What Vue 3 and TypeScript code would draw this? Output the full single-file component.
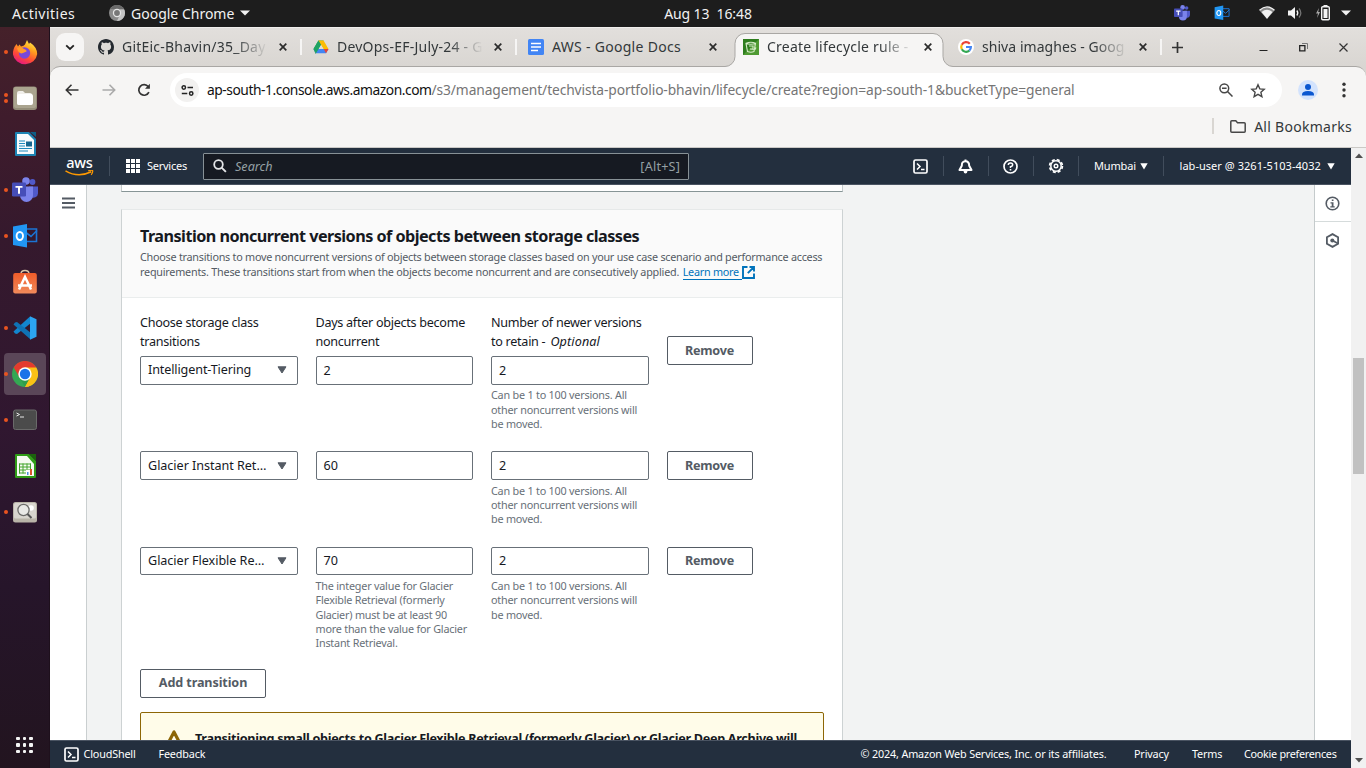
<script setup lang="ts">
interface Tab { title: string; icon: 'github' | 'drive' | 'docs' | 's3' | 'google'; active?: boolean; sep?: boolean }
interface Transition { storage: string; days: string; keep: string; help: string[] }

const tabs: Tab[] = [
  { title: 'GitEic-Bhavin/35_Day', icon: 'github', sep: true },
  { title: 'DevOps-EF-July-24 - G', icon: 'drive', sep: true },
  { title: 'AWS - Google Docs', icon: 'docs' },
  { title: 'Create lifecycle rule -', icon: 's3', active: true },
  { title: 'shiva imaghes - Goog', icon: 'google', sep: true },
]

const transitions: Transition[] = [
  { storage: 'Intelligent-Tiering', days: '2', keep: '2', help: [] },
  { storage: 'Glacier Instant Ret…', days: '60', keep: '2', help: [] },
  {
    storage: 'Glacier Flexible Re…',
    days: '70',
    keep: '2',
    help: ['The integer value for Glacier', 'Flexible Retrieval (formerly', 'Glacier) must be at least 90', 'more than the value for Glacier', 'Instant Retrieval.'],
  },
]
const keepHelp: string[] = ['Can be 1 to 100 versions. All', 'other noncurrent versions will', 'be moved.']

const dock: { name: string; dots: number; current?: boolean }[] = [
  { name: 'firefox', dots: 1 },
  { name: 'files', dots: 2 },
  { name: 'writer', dots: 0 },
  { name: 'teams', dots: 1 },
  { name: 'outlook', dots: 1 },
  { name: 'software', dots: 0 },
  { name: 'vscode', dots: 1 },
  { name: 'chrome', dots: 1, current: true },
  { name: 'terminal', dots: 1 },
  { name: 'calc', dots: 0 },
  { name: 'viewer', dots: 1 },
]
const nine: number[] = [0, 1, 2, 3, 4, 5, 6, 7, 8]
</script>

<template>
  <div class="desktop">
    <header class="topbar">
      <span class="activities">Activities</span>
      <svg class="tb-chrome" width="16" height="16" viewBox="0 0 16 16">
        <circle cx="8" cy="8" r="8" fill="#8b8b8b" /><path d="M1 4A8 8 0 0 1 15 4H8z" fill="#6a6a6a" /><path d="M15.2 4.5A8 8 0 0 1 8 16L11 9.5 10.500 4.500z" fill="#c4c4c4" />
        <circle cx="8" cy="8" r="4.200" fill="#e6e6e6" /><circle cx="8" cy="8" r="2.900" fill="#777" />
      </svg>
      <span class="appname">Google Chrome</span>
      <svg class="tb-caret" width="10" height="6" viewBox="0 0 10 6"><path d="M0 .5h10L5 5.500z" fill="#f2f2f2" /></svg>
      <span class="clock">Aug 13&nbsp; 16:48</span>
      <div class="tray">
        <svg class="t-teams" width="16" height="16" viewBox="0 0 26 26"><use href="#teams" /></svg>
        <svg class="t-outlook" width="16" height="16" viewBox="0 0 26 26"><use href="#outlook" /></svg>
        <svg class="t-wifi" width="16" height="14" viewBox="0 0 16 14"><path d="M0.500 4.500Q8-2.500 15.500 4.500L8 13z" fill="#8a8a8a" /><path d="M2.500 6Q8 1.500 13.500 6L8 12.800z" fill="#f2f2f2" /><path d="M.5 4.300Q8-2.500 15.500 4.300" fill="none" stroke="#f2f2f2" stroke-width="1.300" /></svg>
        <svg class="t-vol" width="16" height="14" viewBox="0 0 16 14"><path d="M1 4.500h3L8 1v12L4 9.500H1z" fill="#f2f2f2" /><path d="M9.800 4.500q2 2.500 0 5" fill="none" stroke="#f2f2f2" stroke-width="1.300" /><path d="M12 2.500q3.700 4.500 0 9" fill="none" stroke="#777" stroke-width="1.200" /></svg>
        <svg class="t-bat" width="15" height="16" viewBox="0 0 15 16"><path d="M3 3L0 8.500h2L1 13l3-6H2.200z" fill="#aaa" /><path d="M7.500 0h4v2h-4z" fill="#f2f2f2" /><rect x="5.700" y="1.700" width="7.600" height="13" rx="1" fill="none" stroke="#f2f2f2" stroke-width="1.400" /><path d="M7.500 4h4v9h-4z" fill="#f2f2f2" /></svg>
        <svg width="10" height="6" viewBox="0 0 10 6"><path d="M0 .5h10L5 5.500z" fill="#f2f2f2" /></svg>
      </div>
    </header>

    <svg class="defs" width="0" height="0">
      <defs>
        <linearGradient id="ffg" x1=".8" y1="0" x2=".3" y2="1"><stop offset="0" stop-color="#fff44f" /><stop offset=".35" stop-color="#ffa21e" /><stop offset=".7" stop-color="#ff4a36" /><stop offset="1" stop-color="#e31587" /></linearGradient>
        <linearGradient id="swg" x1="0" y1="0" x2="0" y2="1"><stop offset="0" stop-color="#ef5b29" /><stop offset="1" stop-color="#f08a5b" /></linearGradient>
        <g id="teams">
          <circle cx="20.500" cy="5" r="2.900" fill="#5059c9" /><path d="M17 9.500h9v6.500a4.500 4.500 0 0 1-7.500 3.500z" fill="#5059c9" />
          <circle cx="14" cy="4" r="3.800" fill="#7b83eb" /><path d="M8 9.500h13v9a6.500 6.500 0 0 1-13 0z" fill="#7b83eb" />
          <rect y="5.500" width="14" height="14" rx="1.300" fill="#464eb8" /><path d="M3.500 9h7v1.800H8v6H6v-6H3.500z" fill="#fff" />
        </g>
        <g id="outlook">
          <path d="M13 6h11.500v12.500H13z" fill="none" stroke="#1b74d3" stroke-width="1.600" /><path d="M14.500 10l4.500 3.500 6-6" fill="none" stroke="#1b74d3" stroke-width="1.600" />
          <path d="M1 3.500L15 1v23.500L1 22z" fill="#2196f3" /><ellipse cx="7.800" cy="13" rx="3.200" ry="4" fill="none" stroke="#fff" stroke-width="1.900" />
        </g>
      </defs>
    </svg>

    <div class="below">
      <nav class="dock">
        <div v-for="d in dock" :key="d.name" class="dock-item" :class="{ current: d.current }">
          <div class="dots"><i v-for="n in d.dots" :key="n"></i></div>
          <svg width="26" height="26" viewBox="0 0 26 26">
            <g v-if="d.name === 'firefox'">
              <path d="M4.500 5L6 7.500 7.500 5.500 9 7.500Q12 7 13 5.500L15 1l2 4 1-1.500Q25 8 25.200 15A12.200 11.500 0 0 1 1 15.500Q.5 10 4.500 5z" fill="url(#ffg)" />
              <circle cx="12.500" cy="14" r="5.700" fill="#7848d8" /><path d="M5 9q4-2 7 1 3 1 2.500 2.500L11 14q-3 1.500-5-2z" fill="#ff9a2b" />
            </g>
            <g v-else-if="d.name === 'files'">
              <rect x="1" y="1.500" width="24" height="23.500" rx="3" fill="#948d79" /><rect x="2" y="2" width="22" height="21" rx="2" fill="#aaa48f" />
              <path d="M5 8q0-2 2-2h4l2 2h5q2 0 2 2v8q0 2-2 2H7q-2 0-2-2z" fill="#f1efea" /><rect x="5" y="9" width="16" height="11" rx="2" fill="#fff" />
            </g>
            <g v-else-if="d.name === 'writer'">
              <path d="M4 1h13l7 7v16q0 1-1 1H4q-1 0-1-1V2q0-1 1-1z" fill="#1c84b4" /><path d="M5 3h11l6 6v14H5z" fill="#f7fbfd" /><path d="M18 1h6v5z" fill="#0e5e86" />
              <path d="M7 10h6M7 12.500h6M7 15h6M7 17.500h13M7 20h9" stroke="#1e8bbd" stroke-width="1.200" /><path d="M14 10.500h6v5h-6z" fill="#17678f" />
            </g>
            <use v-else-if="d.name === 'teams'" href="#teams" />
            <use v-else-if="d.name === 'outlook'" href="#outlook" />
            <g v-else-if="d.name === 'software'">
              <path d="M9 5q0-3.500 4-3.500T17 5" fill="none" stroke="#d9c7a8" stroke-width="1.400" /><rect x="1.200" y="4" width="23.600" height="20.500" rx="2" fill="url(#swg)" />
              <path d="M7 20.500L13 8l6 12.500M6 16.500h14" fill="none" stroke="#fff" stroke-width="2.500" />
            </g>
            <g v-else-if="d.name === 'vscode'">
              <path d="M18 1.500L1.500 16.500l1.500 2 2 .5L19 8z" fill="#1286cf" /><path d="M18 24L1.500 9.500l1.500-2 2-.5L19 18z" fill="#0f72b5" /><path d="M18 1.200l6.500 3v17.600l-6.500 3z" fill="#2ca5f2" />
            </g>
            <g v-else-if="d.name === 'chrome'">
              <circle cx="13" cy="13" r="13" fill="#34a853" /><path d="M1.700 6.500A13 13 0 0 1 24.300 6.500L13 13z" fill="#e33b2e" /><path d="M24.300 6.500A13 13 0 0 1 13 26L18 16 13 6.500z" fill="#fbc116" />
              <path d="M1.700 6.500L7.600 16.500 13 6.500z" fill="#e33b2e" /><path d="M13 26L18.600 16H13L7.400 16z" fill="#2e9d4c" /><path d="M13 26L18.600 16 20 13l4.500 5Q20 26 13 26z" fill="#fbc116" />
              <circle cx="13" cy="13" r="6.700" fill="#fff" /><circle cx="13" cy="13" r="5.200" fill="#1a73e8" />
            </g>
            <g v-else-if="d.name === 'terminal'">
              <rect x="1.500" y="3" width="23" height="19.500" rx="2" fill="#4b4b4b" stroke="#6a6a6a" /><path d="M4.500 6l3 1.500-3 1.500M8 10h4" fill="none" stroke="#e8e8e8" />
            </g>
            <g v-else-if="d.name === 'calc'">
              <path d="M4 1h13l7 7v16q0 1-1 1H4q-1 0-1-1V2q0-1 1-1z" fill="#2f9c17" /><path d="M5 3h10l7 8v12H5z" fill="#f5fbf2" /><path d="M17 1h7v7z" fill="#1b620d" />
              <path d="M7 11h12M7 14h12M7 17h12M7 20h7M7.500 10.500v10M11 10.500v10M15 10.500v6M18.500 10.500v6" stroke="#42a52c" /><path d="M14 17h7v5h-7z" fill="#fff" /><path d="M15 19h1.500v3H15z" fill="#4a90d9" /><path d="M18 16h2v6h-2z" fill="#d9562b" />
            </g>
            <g v-else>
              <rect x="1" y="3" width="24" height="20.500" rx="2.500" fill="#b9b4a8" /><rect x="2" y="4" width="22" height="15.500" rx="1.500" fill="#d8d5ce" /><circle cx="19" cy="9" r="2.800" fill="#fff" />
              <circle cx="11.500" cy="11" r="5.600" fill="#e9e9e6" stroke="#6c6c6a" stroke-width="1.300" /><path d="M15.500 15l4 4" stroke="#555" stroke-width="2" />
            </g>
          </svg>
        </div>
        <div class="apps"><i v-for="n in nine" :key="n"></i></div>
      </nav>

      <main class="window">
        <div class="tabstrip">
          <button class="tabsearch"><svg width="10" height="7" viewBox="0 0 10 7"><path d="M1.200 1.300L5 5l3.800-3.700" fill="none" stroke="#222" stroke-width="1.800" /></svg></button>
          <div v-for="t in tabs" :key="t.title" class="tab" :class="{ active: t.active, sep: t.sep }">
            <svg v-if="t.active" class="tabshape" width="232" height="34" viewBox="0 0 232 34"><path d="M0 34V33.500H2A10 10 0 0 0 12 23.500V10.500A10 10 0 0 1 22 .5H210A10 10 0 0 1 220 10.500V23.500A10 10 0 0 0 230 33.500H232V34z" fill="#f6f5f4" /><path d="M0 33.500H2A10 10 0 0 0 12 23.500V10.500A10 10 0 0 1 22 .5H210A10 10 0 0 1 220 10.500V23.500A10 10 0 0 0 230 33.500H232" fill="none" stroke="#a9a7a4" /></svg>
            <svg class="favicon" width="16" height="16" viewBox="0 0 16 16">
              <path v-if="t.icon === 'github'" fill="#24292f" d="M8 0C3.580 0 0 3.580 0 8c0 3.540 2.290 6.530 5.470 7.590.4.070.55-.17.55-.38 0-.19-.01-.82-.01-1.490-2.010.37-2.530-.49-2.690-.94-.09-.23-.48-.94-.82-1.130-.28-.15-.68-.52-.01-.53.63-.01 1.080.58 1.230.82.72 1.210 1.870.87 2.330.66.070-.52.28-.87.51-1.070-1.780-.2-3.640-.89-3.640-3.950 0-.87.31-1.590.82-2.150-.08-.2-.36-1.020.08-2.120 0 0 .67-.21 2.200.82.64-.18 1.320-.27 2-.27s1.360.09 2 .27c1.530-1.040 2.200-.82 2.200-.82.44 1.100.16 1.920.08 2.120.51.56.82 1.270.82 2.150 0 3.070-1.870 3.750-3.650 3.950.29.25.54.73.54 1.480 0 1.070-.01 1.930-.01 2.200 0 .21.15.46.55.38A8.010 8.010 0 0 0 16 8c0-4.420-3.580-8-8-8" />
              <g v-else-if="t.icon === 'drive'">
                <path d="M5.400 1.500h5.200L5 11 2.600 15 .5 10z" fill="#34a853" /><path d="M5.400 1.500h5.200L15.500 10h-5z" fill="#fbbc04" /><path d="M.5 10h15L13 14.300H3z" fill="#4285f4" /><path d="M5.400 1.500L8 6 3 14.300.500 10z" fill="#1ea362" /><path d="M10.800 10h4.700L13 14.300z" fill="#ea4335" /><path d="M8 6l2.300 4H5.700z" fill="#e0ddd9" />
              </g>
              <g v-else-if="t.icon === 'docs'"><rect width="16" height="16" rx="1.500" fill="#4285f4" /><path d="M3 4.500h10M3 8h10M3 11.500h7" stroke="#fff" stroke-width="1.700" /></g>
              <g v-else-if="t.icon === 's3'"><path d="M0 0h16v16H0z" fill="#2e7d1e" /><path d="M0 16L16 0v16z" fill="#4f9a32" /><path d="M3 4.300q5-2 9.500 0L11 12.500q-3 1.500-6.500 0zM3 4.300q5 2 9.500 0M6 7h4v3H7l5 .5 1-2" fill="none" stroke="#d7ecc9" stroke-width="1.100" /></g>
              <g v-else fill="none" stroke-width="2.200"><circle cx="8" cy="8" r="8" fill="#fff" /><path d="M11.800 4.800A4.900 4.900 0 0 0 3.800 5.700" stroke="#ea4335" /><path d="M3.800 5.700a4.900 4.900 0 0 0 0 4.600" stroke="#fbbc05" /><path d="M3.800 10.300a4.900 4.900 0 0 0 7.500 1.300" stroke="#34a853" /><path d="M11.300 11.600A4.900 4.900 0 0 0 12.900 8H8" stroke="#4285f4" /></g>
            </svg>
            <span class="tabtitle" :class="t.icon">{{ t.title }}</span>
            <svg class="tabclose" width="8" height="8" viewBox="0 0 8 8"><path d="M.7.700l6.600 6.600M7.300.700L.7 7.300" stroke="#2c2c2c" stroke-width="1.700" /></svg>
          </div>
          <svg class="newtab" width="11" height="11" viewBox="0 0 11 11"><path d="M5.500 0v11M0 5.500h11" stroke="#333" stroke-width="1.700" /></svg>
          <div class="winctl">
            <svg width="9" height="10" viewBox="0 0 9 10"><path d="M.5 7.500h8" stroke="#222" stroke-width="1" /></svg>
            <svg width="9" height="9" viewBox="0 0 9 9"><path d="M.7 2.700h5.200v5.200H.7z" fill="none" stroke="#222" stroke-width="1.300" /><path d="M3 .5h5.500V6" fill="none" stroke="#777" /></svg>
            <svg width="9" height="9" viewBox="0 0 9 9"><path d="M.5.500l8 8M8.500.500l-8 8" stroke="#333" stroke-width="1.200" /></svg>
          </div>
        </div>

        <div class="toolbar">
          <svg class="back" width="14" height="12" viewBox="0 0 14 12"><path d="M6.500.700L1.300 6l5.200 5.300M1.500 6H13.500" fill="none" stroke="#333" stroke-width="1.600" /></svg>
          <svg class="fwd" width="14" height="12" viewBox="0 0 14 12"><path d="M7.500.700L12.700 6 7.500 11.300M12.500 6H.5" fill="none" stroke="#aaa" stroke-width="1.600" /></svg>
          <svg class="reload" width="14" height="14" viewBox="0 0 14 14"><path d="M11.900 9.200A5.300 5.300 0 1 1 11.300 3.700L12 4.500" fill="none" stroke="#333" stroke-width="1.700" /><path d="M12.900.800v4.900H8z" fill="#333" /></svg>
          <div class="urlbar">
            <div class="site"><svg width="13" height="11" viewBox="0 0 13 11"><g fill="none" stroke="#222" stroke-width="1.500"><circle cx="2.800" cy="2.500" r="1.700" /><path d="M6.500 2.500H12M.8 8.500h5.500" /><circle cx="10.200" cy="8.500" r="1.700" /></g></svg></div>
            <span class="url"><b>ap-south-1.console.aws.amazon.com</b><span class="urlpath">/s3/management/techvista-portfolio-bhavin/lifecycle/create?region=ap-south-1&amp;bucketType=general</span></span>
            <svg class="zoomout" width="14" height="14" viewBox="0 0 14 14"><circle cx="5.300" cy="5.300" r="4.400" fill="none" stroke="#474747" stroke-width="1.500" /><path d="M3 5.300h4.600M8.500 8.500l5 5" stroke="#474747" stroke-width="1.500" /></svg>
            <svg class="star" width="16" height="15" viewBox="0 0 16 15"><path d="M8 1.800l1.800 4.100 4.400.4-3.300 3 1 4.400L8 11.400l-3.900 2.300 1-4.400-3.300-3 4.400-.4z" fill="none" stroke="#474747" stroke-width="1.400" /></svg>
          </div>
          <svg class="profile" width="20" height="20" viewBox="0 0 20 20"><circle cx="10" cy="10" r="10" fill="#d3e3fd" /><circle cx="10" cy="7" r="3" fill="#0b57d0" /><path d="M4 15.500v-1q0-3.500 6-3.500t6 3.500v1z" fill="#0b57d0" /></svg>
          <svg class="menu" width="4" height="16" viewBox="0 0 4 16"><g fill="#333"><circle cx="2" cy="2.300" r="1.700" /><circle cx="2" cy="8" r="1.700" /><circle cx="2" cy="13.700" r="1.700" /></g></svg>
        </div>
        <div class="bookmarks">
          <i class="bmsep"></i>
          <svg width="16" height="13" viewBox="0 0 16 13"><path d="M.8 1.800q0-1 1-1h4l1.700 1.900h6.700q1 0 1 1v7.500q0 1-1 1H1.800q-1 0-1-1z" fill="none" stroke="#474747" stroke-width="1.500" /></svg>
          <span>All Bookmarks</span>
        </div>

        <div class="view">
          <div class="page">
            <div class="awsnav">
              <div class="logo"><span>aws</span><svg width="29" height="7" viewBox="0 0 29 7"><path d="M.5.800Q13 8.200 26.300 1.800" fill="none" stroke="#f90" stroke-width="1.500" /><path d="M23.200.800Q27.500-.3 27.700.800q.3 1.500-1.500 4" fill="none" stroke="#f90" stroke-width="1.200" /></svg></div>
              <i class="div d1"></i>
              <div class="grid9"><i v-for="n in nine" :key="n"></i></div>
              <span class="services">Services</span>
              <div class="search">
                <svg width="14" height="14" viewBox="0 0 14 14"><circle cx="5.500" cy="5.500" r="4.300" fill="none" stroke="#e4e6e8" stroke-width="1.800" /><path d="M8.600 8.600l4.300 4.300" stroke="#e4e6e8" stroke-width="1.900" /></svg>
                <em>Search</em><span>[Alt+S]</span>
              </div>
              <div class="navicons">
                <div class="cell"><svg width="15" height="15" viewBox="0 0 15 15"><rect x="1" y="1" width="13" height="13" rx="1.500" fill="none" stroke="#fff" stroke-width="1.700" /><path d="M4 4.500l3 3-3 3M8 10.500h3.500" fill="none" stroke="#fff" stroke-width="1.500" /></svg></div>
                <div class="cell"><svg width="15" height="15" viewBox="0 0 15 15"><path d="M7.500.500v2M7.500 2.200c-3 0-3.700 2-3.700 4.500L1.500 11h12l-2.300-4.300C11.200 4.200 10.500 2.200 7.500 2.200z" fill="none" stroke="#fff" stroke-width="2" stroke-linejoin="round" /><path d="M5.500 12h4q-.3 2.500-2 2.500t-2-2.500z" fill="#fff" /></svg></div>
                <div class="cell"><svg width="15" height="15" viewBox="0 0 15 15"><circle cx="7.500" cy="7.500" r="6.500" fill="none" stroke="#fff" stroke-width="1.700" /><path d="M5.300 6Q5.300 4 7.500 4t2.200 1.900q0 1.300-2.200 1.800V9" fill="none" stroke="#fff" stroke-width="1.500" /><path d="M6.700 10h1.600v1.500H6.700z" fill="#fff" /></svg></div>
                <div class="cell"><svg width="16" height="16" viewBox="0 0 16 16"><circle cx="8" cy="8" r="6.400" fill="none" stroke="#fff" stroke-width="1.700" stroke-dasharray="3 2.027" /><circle cx="8" cy="8" r="5.200" fill="none" stroke="#fff" stroke-width="1.500" /><circle cx="8" cy="8" r="1.800" fill="none" stroke="#fff" stroke-width="1.400" /></svg></div>
              </div>
              <div class="region"><span>Mumbai</span><svg width="8" height="7" viewBox="0 0 8 7"><path d="M.3.300h7.400L4 6.500z" fill="#fff" /></svg></div>
              <div class="account"><span>lab-user @ 3261-5103-4032</span><svg width="8" height="7" viewBox="0 0 8 7"><path d="M.3.300h7.400L4 6.500z" fill="#fff" /></svg></div>
            </div>

            <div class="body">
              <aside class="leftnav"><svg width="13" height="12" viewBox="0 0 13 12"><path d="M0 1.500h13M0 6h13M0 10.500h13" stroke="#545b64" stroke-width="1.900" /></svg></aside>
              <section class="content">
                <div class="prevcard"></div>
                <div class="card">
                  <div class="cardhead">
                    <h2>Transition noncurrent versions of objects between storage classes</h2>
                    <p class="l1">Choose transitions to move noncurrent versions of objects between storage classes based on your use case scenario and performance access</p>
                    <p class="l2"><span>requirements. These transitions start from when the objects become noncurrent and are consecutively applied.</span><a>Learn more<svg width="13" height="13" viewBox="0 0 13 13"><path d="M5.500 1H1v11h11V7.500M7.500 1H12v4.500M12 1L5.800 7.200" fill="none" stroke="#0073bb" stroke-width="1.900" /></svg></a></p>
                  </div>
                  <div class="cardbody">
                    <div v-for="(t, i) in transitions" :key="i" class="row">
                      <div class="col">
                        <label v-if="i === 0">Choose storage class<br>transitions</label>
                        <div class="field select"><span>{{ t.storage }}</span><svg width="10" height="8" viewBox="0 0 10 8"><path d="M1 .8h8L5 7z" fill="#545b64" stroke="#545b64" stroke-linejoin="round" /></svg></div>
                      </div>
                      <div class="col">
                        <label v-if="i === 0">Days after objects become<br>noncurrent</label>
                        <div class="field">{{ t.days }}</div>
                        <div class="help"><div v-for="h in t.help" :key="h">{{ h }}</div></div>
                      </div>
                      <div class="col">
                        <label v-if="i === 0">Number of newer versions<br>to retain - <em>Optional</em></label>
                        <div class="field">{{ t.keep }}</div>
                        <div class="help"><div v-for="h in keepHelp" :key="h">{{ h }}</div></div>
                      </div>
                      <div class="col" :class="{ first: i === 0 }"><button class="btn remove">Remove</button></div>
                    </div>
                    <button class="btn add">Add transition</button>
                    <div class="alert">
                      <svg width="16" height="15" viewBox="0 0 16 15"><path d="M8 2L1.700 14h12.600z" fill="none" stroke="#8d6605" stroke-width="3.200" stroke-linejoin="round" /></svg>
                      <strong>Transitioning small objects to Glacier Flexible Retrieval (formerly Glacier) or Glacier Deep Archive will</strong>
                    </div>
                  </div>
                </div>
              </section>
              <aside class="tools">
                <div><svg width="15" height="15" viewBox="0 0 15 15"><circle cx="7.500" cy="7.500" r="6.300" fill="none" stroke="#545b64" stroke-width="1.600" /><path d="M6.800 3.400h1.700V5H6.800zM5.500 6.200h3v4h1.200v1.300H5.300v-1.300h1.400V7.500H5.500z" fill="#545b64" /></svg></div>
                <div><svg width="15" height="15" viewBox="0 0 15 15"><path d="M7.500 1.100l5.600 3.200v6.400l-5.600 3.200-5.600-3.200V4.300z" fill="none" stroke="#545b64" stroke-width="1.800" /><circle cx="7.300" cy="7.500" r="2" fill="#545b64" /><path d="M7.500 7.500l5.500 3" stroke="#545b64" stroke-width="1.700" /></svg></div>
              </aside>
            </div>

            <footer class="foot">
              <svg width="15" height="15" viewBox="0 0 15 15"><rect x="1" y="1" width="13" height="13" rx="1.500" fill="none" stroke="#fff" stroke-width="1.700" /><path d="M4 4.500l3 3-3 3M8 10.500h3.500" fill="none" stroke="#fff" stroke-width="1.500" /></svg>
              <span class="cs">CloudShell</span><span class="fb">Feedback</span>
              <span class="copy">© 2024, Amazon Web Services, Inc. or its affiliates.</span><span class="pr">Privacy</span><span class="te">Terms</span><span class="co">Cookie preferences</span>
            </footer>
          </div>
          <div class="scroll">
            <svg width="8" height="5" viewBox="0 0 8 5"><path d="M0 5h8L4 .5z" fill="#505050" /></svg>
            <i></i>
            <svg width="8" height="5" viewBox="0 0 8 5"><path d="M0 0h8L4 4.500z" fill="#505050" /></svg>
          </div>
        </div>
      </main>
    </div>
  </div>
</template>

<style>
body { margin: 0; overflow: hidden; }
</style>

<style scoped>
* { box-sizing: border-box; }
svg { display: block; flex: none; }
span, p, h2, label, button, strong, em, a { white-space: nowrap; }
button { font-family: inherit; margin: 0; padding: 0; }
.defs { position: absolute; }
.desktop { width: 1366px; height: 768px; display: flex; flex-direction: column; overflow: hidden; font-family: "Noto Sans", "Open Sans", sans-serif; }
.topbar { position: relative; height: 27px; flex: none; background: #1d1d1d; color: #f2f2f2; display: flex; align-items: center; padding: 0 0 1px 12px; font-size: 14px; letter-spacing: -.1px; }
.activities { width: 97px; letter-spacing: .5px; }
.appname { letter-spacing: 0; }
.tb-chrome { margin-right: 6px; }
.tb-caret { margin-left: 5.500px; }
.clock { position: absolute; left: 0; right: 0; text-align: center; padding-left: 50px; }
.tray { margin-left: auto; display: flex; align-items: center; padding-right: 15px; }
.t-teams { margin-right: 24px; }
.t-outlook { margin-right: 29px; }
.t-wifi { margin-right: 12px; }
.t-vol { margin-right: 13px; }
.t-bat { margin-right: 10px; }
.below { flex: 1; display: flex; min-height: 0; }

.dock { width: 50px; flex: none; background: linear-gradient(#45212a 0, #3f1c2c 90px, #35192d 210px, #301730 400px, #26152a 560px, #22141f 741px); border-right: 1px solid #1e101c; display: flex; flex-direction: column; align-items: center; padding-top: 4px; }
.dock-item { width: 42px; height: 42px; margin-bottom: 4px; border-radius: 4px; position: relative; display: flex; align-items: center; justify-content: center; flex: none; }
.dock-item.current { background: #5a4658; }
.dots { position: absolute; left: 0; top: 0; bottom: 0; display: flex; flex-direction: column; justify-content: center; gap: 2px; }
.dots i { width: 4px; height: 4px; border-radius: 50%; background: #e95420; }
.apps { margin-top: auto; margin-bottom: 15px; display: grid; grid-template-columns: repeat(3, 3.500px); gap: 3px; }
.apps i { width: 3.500px; height: 3.500px; border-radius: 1px; background: #f4f4f4; }

.window { flex: 1; min-width: 0; display: flex; flex-direction: column; background: #d9d6d2; }
.tabstrip { height: 39px; flex: none; display: flex; padding: 5px 0 0 6px; background: linear-gradient(#e2dfdc, #d9d6d2); border-top: 1px solid #f0eeec; position: relative; }
.tabsearch { width: 28px; height: 28px; margin-right: 2px; border: 0; border-radius: 9px; background: #f6f5f4; display: flex; align-items: center; justify-content: center; }
.tab { width: 215px; height: 28px; position: relative; display: flex; align-items: center; padding-left: 12px; }
.tab.sep::after { content: ""; position: absolute; right: -1px; top: 6px; width: 2px; height: 16px; background: #f6f5f4; }
.tabshape { position: absolute; left: -8px; top: 0; z-index: 2; }
.favicon, .tabtitle, .tabclose { position: relative; z-index: 3; }
.favicon { margin-right: 8px; }
.tabtitle { width: 145px; overflow: hidden; padding-bottom: 2px; font-size: 14px; letter-spacing: .22px; color: #33383a; -webkit-mask-image: linear-gradient(90deg, #000 112px, transparent 146px); mask-image: linear-gradient(90deg, #000 112px, transparent 146px); }
.tabtitle.docs { letter-spacing: .3px; -webkit-mask-image: none; mask-image: none; }
.tabtitle.google { letter-spacing: .05px; }
.tabclose { margin-left: 12px; }
.newtab { margin: 9px 0 0 11px; }
.winctl { display: flex; gap: 31px; margin: 10px 18.500px 0 auto; }
.toolbar { height: 43px; flex: none; background: #f6f5f4; border: 1px solid #a9a7a4; border-width: 1px 0 0; border-radius: 10px 10px 0 0; display: flex; align-items: center; padding: 4px 0 0 15px; }
.back { margin-right: 23px; }
.fwd { margin-right: 21px; }
.reload { margin-right: 19px; }
.urlbar { width: 1112px; height: 34px; border-radius: 17px; background: #fff; display: flex; align-items: center; padding-left: 5px; flex: none; }
.site { width: 24px; height: 24px; border-radius: 12px; background: #f2f1f0; display: flex; align-items: center; justify-content: center; }
.url { margin-left: 8px; padding-bottom: 1px; font-size: 13.800px; color: #757575; letter-spacing: -.11px; }
.url b { font-weight: 400; color: #111; letter-spacing: -.45px; }
.zoomout { margin-left: auto; margin-right: 17px; }
.star { margin-right: 16px; }
.profile { margin-left: 16px; }
.menu { margin-left: 24px; }
.bookmarks { height: 39px; flex: none; background: #f6f5f4; display: flex; align-items: center; justify-content: flex-end; padding: 0 14px 4px 0; border-bottom: 1px solid #cbc9c6; font-size: 14px; letter-spacing: .28px; color: #33383a; }
.bookmarks svg { margin-right: 8.500px; }
.bmsep { width: 2px; height: 16px; background: #d9d6d2; margin-right: 16px; }

.view { flex: 1; min-height: 0; display: flex; }
.page { width: 1301px; display: flex; flex-direction: column; letter-spacing: 0; }
.awsnav { height: 37px; flex: none; background: #232f3e; border-bottom: 1px solid #4a5462; color: #fff; display: flex; align-items: center; font-size: 11px; }
.logo { width: 29px; margin-left: 15px; height: 22px; display: flex; flex-direction: column; align-items: center; }
.logo span { font-size: 14.500px; line-height: 14px; font-weight: 500; letter-spacing: -.2px; height: 14px; }
.logo svg { margin-top: 1px; }
.div { width: 1px; height: 20px; background: #414d5c; }
.d1 { margin: 0 16px 0 15px; }
.grid9 { display: grid; grid-template-columns: repeat(3, 4px); gap: 1px; margin-right: 7px; }
.grid9 i { width: 4px; height: 4px; background: #fff; }
.services { width: 56px; letter-spacing: -.25px; padding-bottom: 1px; }
.search { width: 486px; height: 27px; border: 1px solid #879196; border-radius: 1px; background: #161a22; display: flex; align-items: center; padding: 0 8px 0 9px; color: #95a0a5; font-size: 12.600px; }
.search em { margin-left: 8px; }
.search span { margin-left: auto; letter-spacing: .2px; }
.navicons { display: flex; margin-left: auto; }
.cell { width: 45px; height: 20px; border-right: 1px solid #414d5c; display: flex; align-items: center; justify-content: center; padding-right: 1px; }
.region { display: flex; align-items: center; height: 20px; width: 85px; padding-left: 15px; border-right: 1px solid #414d5c; }
.region span { width: 46px; letter-spacing: -.15px; padding-bottom: 1px; }
.account { display: flex; align-items: center; width: 187px; padding-left: 15.500px; }
.account span { width: 147px; letter-spacing: .04px; padding-bottom: 1px; }

.body { flex: 1; min-height: 0; display: flex; overflow: hidden; }
.leftnav { width: 37px; background: #fff; border-right: 1px solid #cacfd0; padding: 12px 0 0 12px; }
.content { flex: 1; background: #f2f3f3; padding-left: 34px; overflow: hidden; }
.prevcard { width: 722px; height: 7px; background: #fff; border: 1px solid #c5cbcc; border-top: 0; border-bottom-color: #879596; margin-bottom: 17px; }
.card { width: 722px; background: #fff; border: 1px solid #cdd2d3; border-top-color: #e6e9e9; height: 700px; }
.cardhead { height: 88px; background: #fafafa; border-bottom: 1px solid #eaeded; padding: 14px 18px 0; }
h2 { margin: 0 0 1px; font-size: 16.200px; line-height: 24px; font-weight: 700; color: #16191f; letter-spacing: -.535px; }
.cardhead p { margin: 0; font-size: 10.800px; line-height: 15px; letter-spacing: -.25px; color: #545b64; display: flex; }
.cardhead .l2 span { letter-spacing: -.221px; }
.cardhead a { color: #0073bb; margin-left: 3.500px; display: flex; position: relative; }
.cardhead a svg { margin: 2px 0 0 3px; }
.cardhead a::after { content: ""; position: absolute; left: 0; right: 13px; bottom: -1px; height: 1px; background: #0073bb; }
.cardbody { padding: 15px 18px 0; font-size: 12.600px; color: #16191f; }
.row { display: grid; grid-template-columns: repeat(4, 157.500px); column-gap: 18px; margin-bottom: 19.930px; }
.row:nth-child(3) { margin-bottom: 18.100px; }
.row:nth-child(3) .field, .row:nth-child(3) .btn { padding-bottom: 1px; }
label { display: block; line-height: 19px; margin-bottom: 5px; letter-spacing: -.28px; }
label em { letter-spacing: .12px; margin-left: 2px; }
.field { height: 28.800px; border: 1px solid #687078; border-radius: 2px; display: flex; align-items: center; padding: 0 7px; }
.select { justify-content: space-between; padding-right: 10px; }
.select span { letter-spacing: -.04px; padding-bottom: 1px; }
.row:nth-child(3) .select { padding-bottom: 0; }
.row:first-child .select span { letter-spacing: -.12px; }
.help { margin-top: 3.400px; font-size: 10.800px; line-height: 14.400px; letter-spacing: -.21px; color: #687078; white-space: nowrap; }
.first { padding-top: 23px; }
.btn { display: block; height: 28.800px; border: 1px solid #545b64; border-radius: 2px; background: #fff; color: #545b64; font-size: 12.600px; font-weight: 700; letter-spacing: -.2px; }
.remove { width: 86px; }
.add { width: 126px; letter-spacing: -.1px; padding-bottom: 2px; }
.alert { margin-top: 14.400px; height: 80px; border: 1px solid #8d6605; border-radius: 2px; background: #fffce9; display: flex; padding: 16px 0 0 25px; }
.alert svg { margin-top: 1px; }
.alert strong { margin-left: 13px; line-height: 19px; letter-spacing: -.29px; }
.tools { width: 37px; background: #fff; border-left: 1px solid #c5cbcc; }
.tools div { height: 37px; display: flex; align-items: center; justify-content: center; padding-right: 1px; }
.tools div:first-child { border-bottom: 1px solid #d5dbdb; }
.foot { height: 28px; flex: none; background: #232f3e; border-top: 1px solid #4a5462; color: #fff; display: flex; align-items: center; padding-left: 14px; font-size: 10.800px; letter-spacing: -.16px; }
.foot span { padding-bottom: 2px; }
.cs { width: 75px; margin-left: 4.500px; }
.copy { margin-left: auto; width: 273.500px; }
.pr { width: 58px; }
.te { width: 52px; }
.co { width: 107px; letter-spacing: -.28px; }
.scroll { width: 15px; background: #f1f1f1; display: flex; flex-direction: column; align-items: center; padding: 5px 0; }
.scroll i { width: 11px; height: 116px; background: #c1c1c1; margin: 200px 0 auto; }
</style>
